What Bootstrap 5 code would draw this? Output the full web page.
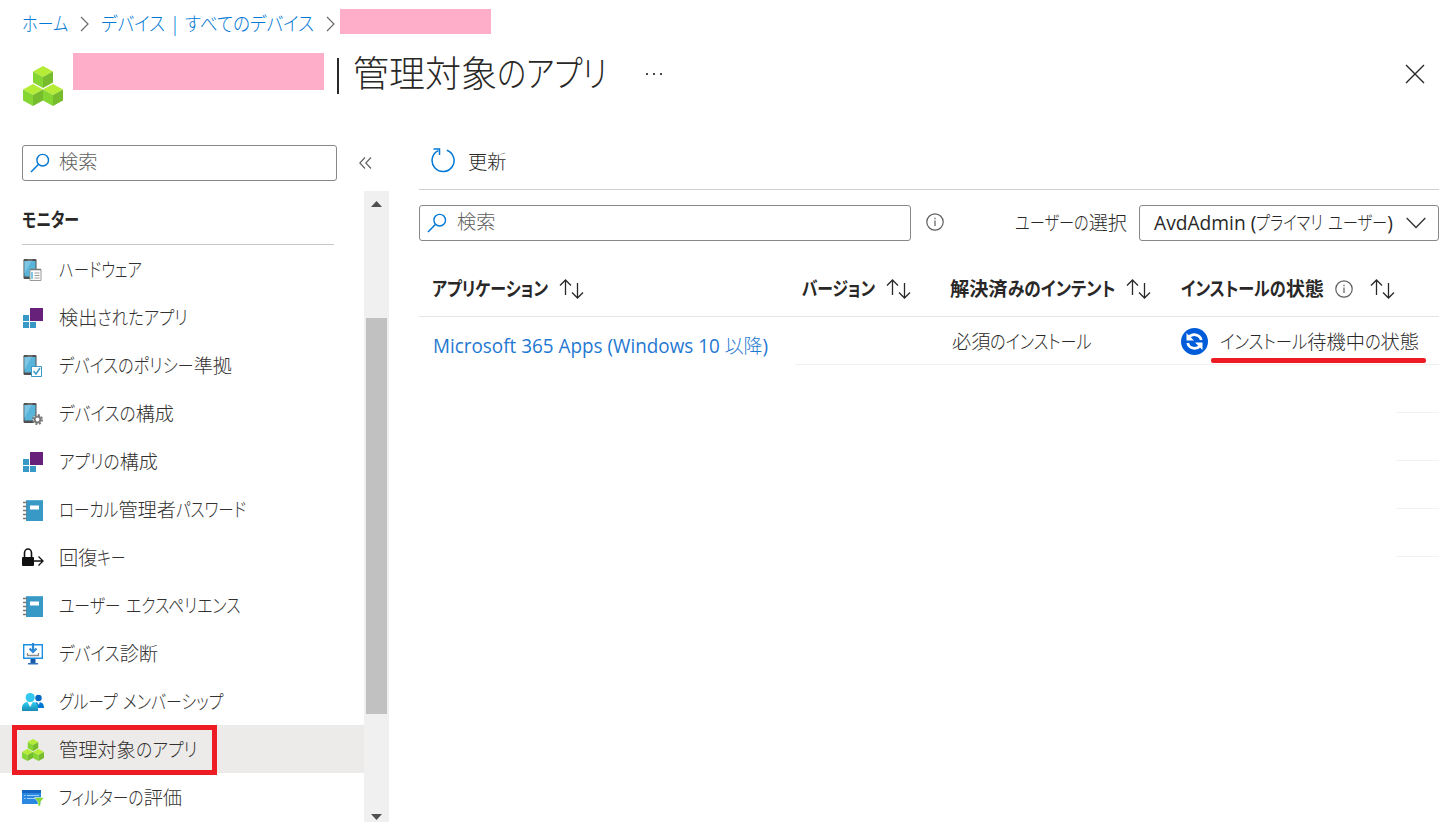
<!DOCTYPE html>
<html lang="ja">
<head>
<meta charset="utf-8">
<meta name="viewport" content="width=device-width, initial-scale=1">
<title>管理対象のアプリ</title>
<link href="https://cdn.jsdelivr.net/npm/bootstrap@5.3.0/dist/css/bootstrap.min.css" rel="stylesheet">
<style>
  body { font-family: "Open Sans", "Noto Sans CJK JP", sans-serif; font-size: 19.2px; line-height: 24px; color: #292827; background: #fff; font-weight: 300; }
  .page { width: 1456px; height: 822px; }
  svg { display: block; flex: none; }
  .fit { display: block; flex: none; white-space: pre; transform-origin: 0 50%; font-feature-settings: "palt"; }
  .kana { display: inline-block; transform-origin: 0 50%; }
  .latin { font-weight: 400; }
  .crumbs { height: 47px; padding-left: 22px; color: #0078d4; }
  .crumbs a, .app-link { color: inherit; text-decoration: none; }
  .mask { background: #ffaec9; flex: none; }
  .title-row { height: 86px; padding-left: 23px; }
  .blade-title { font-size: 36px; line-height: 44px; font-weight: 300; margin: 5px 0 0 14px; }
  .title-bar { width: 2px; height: 36px; margin: 11px 0 0 13px; background: #292827; }
  .side { width: 389px; }
  .side-tools { height: 58px; padding: 12px 0 0 22px; }
  .search-box { height: 36px; border: 1px solid #8a8886; border-radius: 3px; color: #605e5c; padding: 0 0 3px 7px; }
  .menu-col { width: 364px; }
  .group-head { height: 54px; margin: 0 30px 0 22px; border-bottom: 1px solid #c8c6c4; font-weight: 700; padding-bottom: 3px; }
  .menu-item { height: 48px; flex: none; padding: 2px 0 0 22px; gap: 15px; color: #323130; text-decoration: none; }
  .menu-item.selected { background: #edebe9; }
  .marker { left: 12px; top: 0; width: 205px; height: 50px; border: 5px solid #ed1c24; z-index: 2; }
  .track { width: 25px; background: #f0f0f0; padding: 10px 0 2px; }
  .thumb { width: 21px; height: 396px; background: #c1c1c1; margin-top: 111px; }
  .content { margin-left: 30px; width: 1020px; }
  .toolbar { height: 57px; border-bottom: 1px solid #d2d0ce; padding-left: 12px; gap: 11px; }
  .filters { height: 51px; margin-top: 15px; }
  .picker { width: 300px; height: 36px; border: 1px solid #8a8886; border-radius: 3px; padding: 0 12px 0 14px; }
  .tgrid { display: grid; grid-template-columns: 376px 142px 231px 271px; }
  .thead-row { height: 61px; border-bottom: 1px solid #e6e5e4; font-weight: 700; padding-top: 6px; }
  .tgrid > div { padding-left: 13px; }
  .tgrid > div:nth-child(2) { padding-left: 7px; }
  .trow { height: 48px; }
  .trow > div { padding-top: 3px; }
  .trow > div:first-child { padding: 10px 0 0 14px; }
  .trow > div + div { border-bottom: 1px solid #f0efee; }
  .app-link { color: #1f78d1; }
  .stub { width: 43px; height: 48px; border-bottom: 1px solid #f3f2f1; }
  .underline-mark { left: 43px; top: 41px; width: 215px; height: 5px; border-radius: 2px; background: #ed1c24; }
</style>
</head>
<body>
<svg width="0" height="0" class="position-absolute" aria-hidden="true">
  <defs>
    <linearGradient id="gl" x1="0" y1="0" x2="0" y2="1"><stop offset="0" stop-color="#32d4f5"/><stop offset="1" stop-color="#198ab3"/></linearGradient>
    <symbol id="cube" viewBox="0 0 20 22"><path d="M10 0 20 5.500 10 11 0 5.500z" fill="#b4ec36"/><path d="M0 5.500 10 11v11L0 16.500z" fill="#86d633"/><path d="M20 5.500 10 11v11l10-5.500z" fill="#76bc2d"/></symbol>
    <symbol id="cubes" viewBox="0 0 40 40"><use href="#cube" x="10" y="0" width="20" height="22"/><use href="#cube" x="0" y="18" width="20" height="22"/><use href="#cube" x="20" y="18" width="20" height="22"/></symbol>
    <symbol id="phone" viewBox="0 0 22 22"><rect x="1.500" y="0" width="13" height="20" rx="1.200" fill="#4f4f51"/><rect x="2.500" y="2" width="11" height="15.500" fill="#59b4d9"/><path d="M2.500 2h7l-7 13z" fill="#7cc6e3"/><path d="M5.500 1h5" stroke="#aaa" stroke-width=".7"/></symbol>
    <symbol id="apps" viewBox="0 0 22 22"><rect x="8" y="1" width="13" height="13" fill="#68217a"/><path d="M1 8h6v6H1zM1 15h6v6H1zM8 15h6v6H8z" fill="#3999c6"/></symbol>
    <symbol id="book" viewBox="0 0 22 22"><path d="M4 1h17v21H4z" fill="#3999c6"/><path d="M4 1h17v1H4z" fill="#5cadd2"/><path d="M8 6.500h9v4H8z" fill="#fff"/><path d="M1 3.500h4M1 7.500h4M1 11.500h4M1 15.500h4M1 19.500h4" stroke="#7a7a7a" stroke-width="1.300"/></symbol>
    <symbol id="sort" viewBox="0 0 26 20"><path d="M6.500 16V1M1 6.500 6.500 1 12 6.500M18.500 4v15M13 13.500l5.500 5.500 5.500-5.500" fill="none" stroke="#292827" stroke-width="1.300"/></symbol>
    <symbol id="info" viewBox="0 0 18 18"><circle cx="9" cy="9" r="8.200" fill="none" stroke="#605e5c" stroke-width="1.200"/><path d="M9 7.500v5.500M9 4.800v1.400" stroke="#605e5c" stroke-width="1.200"/></symbol>
    <symbol id="lens" viewBox="0 0 20 20"><circle cx="12.700" cy="7.200" r="5.800" fill="none" stroke="#0078d4" stroke-width="1.400"/><path d="M8.600 11.300 1 19" stroke="#0078d4" stroke-width="1.500"/></symbol>
    <symbol id="sep" viewBox="0 0 9 16"><path d="m1 1 7 7-7 7" fill="none" stroke="#6c6a68" stroke-width="1.200"/></symbol>
  </defs>
</svg>
<div class="page overflow-hidden d-flex flex-column">
  <nav class="crumbs d-flex align-items-center">
    <a href="#" class="fit" data-w="46">ホーム</a>
    <svg width="9" height="16" style="margin:0 12px"><use href="#sep"/></svg>
    <a href="#" class="fit" data-w="213">デバイス | すべてのデバイス</a>
    <svg width="9" height="16" style="margin:0 5px 0 12px"><use href="#sep"/></svg>
    <span class="mask" style="width:151px;height:25px;margin-top:-4px"></span>
  </nav>
  <header class="title-row d-flex align-items-start">
    <svg width="40" height="40" style="margin-top:19px"><use href="#cubes"/></svg>
    <span class="mask" style="width:251px;height:37px;margin:6px 0 0 10px"></span>
    <span class="title-bar"></span>
    <h1 class="blade-title"><span class="fit" data-w="254">管理対象のアプリ</span></h1>
    <svg width="18" height="4" style="margin:25px 0 0 38px" fill="#484644"><path d="M1 1h2v2H1zM8 1h2v2H8zM15 1h2v2h-2z"/></svg>
    <svg class="ms-auto" width="20" height="20" style="margin:17px 31px 0 0"><path d="m1 1 18 18M19 1 1 19" stroke="#292827" stroke-width="1.400"/></svg>
  </header>
  <div class="d-flex flex-grow-1">
    <aside class="side d-flex flex-column">
      <div class="side-tools d-flex">
        <div class="search-box d-flex align-items-center" style="width:315px">
          <svg width="20" height="20" style="margin:3px 9px 0 0"><use href="#lens"/></svg><span class="fit" data-w="38.4">検索</span>
        </div>
        <svg width="13" height="12" style="margin:12px 0 0 22px"><path d="M6 .5.8 6 6 11.500M12 .5 6.800 6l5.200 5.500" fill="none" stroke="#605e5c" stroke-width="1.100"/></svg>
      </div>
      <div class="d-flex flex-grow-1">
        <div class="menu-col d-flex flex-column">
          <div class="group-head d-flex align-items-center"><span class="fit" data-w="57" style="margin-top:8px">モニター</span></div>
          <a href="#" class="menu-item d-flex align-items-center"><svg width="22" height="22"><use href="#phone"/><path d="M8 10.500h11v11H8z" fill="#fff" stroke="#999" stroke-width="1"/><path d="M8 10.500h11" stroke="#777" stroke-width="1.500"/><path d="M10 13v7" stroke="#59b4d9" stroke-width="1.500"/><path d="M12.500 14h5M12.500 16.500h5M12.500 19h5" stroke="#999"/></svg><span class="fit" data-w="83">ハードウェア</span></a>
          <a href="#" class="menu-item d-flex align-items-center"><svg width="22" height="22"><use href="#apps"/></svg><span class="fit" data-w="129">検出されたアプリ</span></a>
          <a href="#" class="menu-item d-flex align-items-center"><svg width="22" height="22"><use href="#phone"/><path d="M9.500 11.500h10v10h-10z" fill="#fff" stroke="#3999c6"/><path d="m11.500 16 2.500 3 4-6" fill="none" stroke="#3999c6" stroke-width="1.400"/></svg><span class="fit" data-w="173">デバイスのポリシー準拠</span></a>
          <a href="#" class="menu-item d-flex align-items-center"><svg width="22" height="22"><use href="#phone"/><circle cx="15.500" cy="16.500" r="4.700" fill="#fff"/><circle cx="15.500" cy="16.500" r="4.500" fill="none" stroke="#7a7a7a" stroke-width="2" stroke-dasharray="1.900 1.630"/><circle cx="15.500" cy="16.500" r="2.900" fill="none" stroke="#7a7a7a" stroke-width="2"/></svg><span class="fit" data-w="115">デバイスの構成</span></a>
          <a href="#" class="menu-item d-flex align-items-center"><svg width="22" height="22"><use href="#apps"/></svg><span class="fit" data-w="99">アプリの構成</span></a>
          <a href="#" class="menu-item d-flex align-items-center"><svg width="22" height="22"><use href="#book"/></svg><span class="fit" data-w="187">ローカル管理者パスワード</span></a>
          <a href="#" class="menu-item d-flex align-items-center"><svg width="22" height="22"><rect x="0" y="10" width="12" height="9" rx="1" fill="#111"/><path d="M2.500 10V6a3.500 4 0 0 1 7 0v4" fill="none" stroke="#111" stroke-width="1.600"/><path d="M12 14h9M16.500 9.500 21 14l-4.500 4.500" fill="none" stroke="#111" stroke-width="1.300"/></svg><span class="fit" data-w="67">回復キー</span></a>
          <a href="#" class="menu-item d-flex align-items-center"><svg width="22" height="22"><use href="#book"/></svg><span class="fit" data-w="181">ユーザー エクスペリエンス</span></a>
          <a href="#" class="menu-item d-flex align-items-center"><svg width="22" height="22"><path d="M1.700 1.700h18.600v13.600H1.700z" fill="#fff" stroke="#1a8fe3" stroke-width="1.400"/><path d="M8.500 16h5v4h-5z" fill="#1b5aa5"/><path d="M6 20h10v1.500H6z" fill="#2a72c4"/><path d="M11 0v8M7.500 5.500 11 9l3.500-3.500" fill="none" stroke="#2b88d8" stroke-width="2.200"/><path d="M5.500 10v2.500h11V10" fill="none" stroke="#8d8d8d" stroke-width="1.300"/></svg><span class="fit" data-w="99">デバイス診断</span></a>
          <a href="#" class="menu-item d-flex align-items-center"><svg width="22" height="22"><circle cx="16.500" cy="7" r="3.200" fill="#0067c0"/><path d="M11 17c0-4 2-6 5.500-6s5.500 2 5.500 6z" fill="#0078d4"/><path d="m15 11 1.500 3 1.500-3z" fill="#fff"/><path d="M0 20v-3c0-4 3-6.500 8.200-6.500S16 13 16 17v3z" fill="url(#gl)"/><path d="m5.500 11 2.700 5 2.700-5z" fill="#fff"/><circle cx="8.200" cy="6.500" r="4.600" fill="#32c8ed"/></svg><span class="fit" data-w="164">グループ メンバーシップ</span></a>
          <a href="#" class="menu-item selected position-relative d-flex align-items-center"><svg width="22" height="22"><use href="#cubes"/></svg><span class="fit" data-w="138">管理対象のアプリ</span><span class="marker position-absolute"></span></a>
          <a href="#" class="menu-item d-flex align-items-center"><svg width="22" height="22"><path d="M0 3h19v14H0z" fill="#2b88e0"/><path d="M0 3h19v3H0z" fill="#1566c0"/><path d="M2 8.500h1.500M2 11.500h1.500M5 8.500h12M5 11.500h9" stroke="#9fd0ff" stroke-width="1.200"/><path d="M12.500 10.500H22l-3.500 4.500v4h-2.500v-4z" fill="#86d633" stroke="#fff" stroke-width=".5"/></svg><span class="fit" data-w="123">フィルターの評価</span></a>
        </div>
        <div class="track d-flex flex-column align-items-center">
          <svg width="11" height="6" fill="#505050"><path d="M5.500 0 11 6H0z"/></svg>
          <div class="thumb"></div>
          <svg class="mt-auto" width="11" height="6" fill="#505050"><path d="M5.500 6 0 0h11z"/></svg>
        </div>
      </div>
    </aside>
    <main class="content">
      <div class="toolbar d-flex align-items-center">
        <svg width="26" height="26"><path d="M15.800 2.200A11 11 0 1 1 7.200 2.700M2.500 1h6v6" fill="none" stroke="#0078d4" stroke-width="1.500"/></svg>
        <span class="fit" data-w="38.4" style="margin-top:1px">更新</span>
      </div>
      <div class="filters d-flex align-items-start">
        <div class="search-box d-flex align-items-center" style="width:492px"><svg width="20" height="20" style="margin:3px 10px 0 0"><use href="#lens"/></svg><span class="fit" data-w="38.4">検索</span></div>
        <svg width="18" height="18" style="margin:8px 0 0 15px"><use href="#info"/></svg>
        <span class="fit ms-auto" data-w="112" style="margin:6px 12px 0 0">ユーザーの選択</span>
        <div class="picker d-flex align-items-center justify-content-between"><span class="fit" data-w="239"><span class="latin">AvdAdmin (</span>プライマリ ユーザー<span class="latin">)</span></span><svg width="20" height="12"><path d="m.7 1 9.300 9.500L19.300 1" fill="none" stroke="#323130" stroke-width="1.300"/></svg></div>
      </div>
      <div class="tgrid thead-row align-items-center">
        <div class="d-flex align-items-center"><span class="fit" data-w="116">アプリケーション</span><svg width="26" height="20" style="margin-left:11px"><use href="#sort"/></svg></div>
        <div class="d-flex align-items-center"><span class="fit" data-w="73">バージョン</span><svg width="26" height="20" style="margin-left:11px"><use href="#sort"/></svg></div>
        <div class="d-flex align-items-center"><span class="fit" data-w="165">解決済みのインテント</span><svg width="26" height="20" style="margin-left:11px"><use href="#sort"/></svg></div>
        <div class="d-flex align-items-center"><span class="fit" data-w="143">インストールの状態</span><svg width="18" height="18" style="margin:0 17px 0 11px"><use href="#info"/></svg><svg width="26" height="20"><use href="#sort"/></svg></div>
      </div>
      <div class="tgrid trow">
        <div class="d-flex align-items-center"><a href="#" class="fit app-link" data-w="335"><span class="latin">Microsoft 365 Apps (Windows 10 </span>以降<span class="latin">)</span></a></div>
        <div></div>
        <div class="d-flex align-items-center"><span class="fit" data-w="140" style="margin-left:2px">必須のインストール</span></div>
        <div class="d-flex align-items-center position-relative">
          <svg width="27" height="27" style="margin-top:-2px"><circle cx="13.500" cy="13.500" r="13.500" fill="#015cda"/><path d="M8 9.200C11 5.500 18.500 5.500 20.300 12M19 17.800C16 21.500 8.500 21.500 6.700 15" fill="none" stroke="#fff" stroke-width="2.800"/><path d="M5.500 5v7.500H13zM21.500 22v-7.500H14z" fill="#fff"/></svg>
          <span class="fit" data-w="199" style="margin-left:12px">インストール待機中の状態</span>
          <span class="underline-mark position-absolute"></span>
        </div>
      </div>
      <div class="d-flex flex-column align-items-end"><div class="stub"></div><div class="stub"></div><div class="stub"></div><div class="stub"></div></div>
    </main>
  </div>
</div>
<script src="https://cdn.jsdelivr.net/npm/bootstrap@5.3.0/dist/js/bootstrap.bundle.min.js"></script>
<script>
  document.querySelectorAll('.fit').forEach(function (el) {
    var target = Number(el.dataset.w);
    Array.from(el.childNodes).forEach(function (node) {
      if (node.nodeType !== Node.TEXT_NODE) return;
      var parts = document.createDocumentFragment();
      node.data.split(/([\u3041-\u30ff]+)/).forEach(function (run) {
        if (!run) return;
        if (/[\u3041-\u30ff]/.test(run)) {
          var span = document.createElement('span');
          span.className = 'kana';
          span.textContent = run;
          parts.append(span);
        } else {
          parts.append(run);
        }
      });
      node.replaceWith(parts);
    });
    el.style.width = 'max-content';
    var natural = el.getBoundingClientRect().width;
    var runs = Array.from(el.querySelectorAll('.kana'));
    var widths = runs.map(function (r) { return r.getBoundingClientRect().width; });
    var kana = widths.reduce(function (a, b) { return a + b; }, 0);
    if (kana) {
      var k = (target - (natural - kana)) / kana;
      runs.forEach(function (r, i) {
        r.style.width = widths[i] * k + 'px';
        r.style.transform = 'scaleX(' + k + ')';
      });
    } else {
      el.style.transform = 'scaleX(' + target / natural + ')';
    }
    el.style.width = target + 'px';
  });
</script>
</body>
</html>
